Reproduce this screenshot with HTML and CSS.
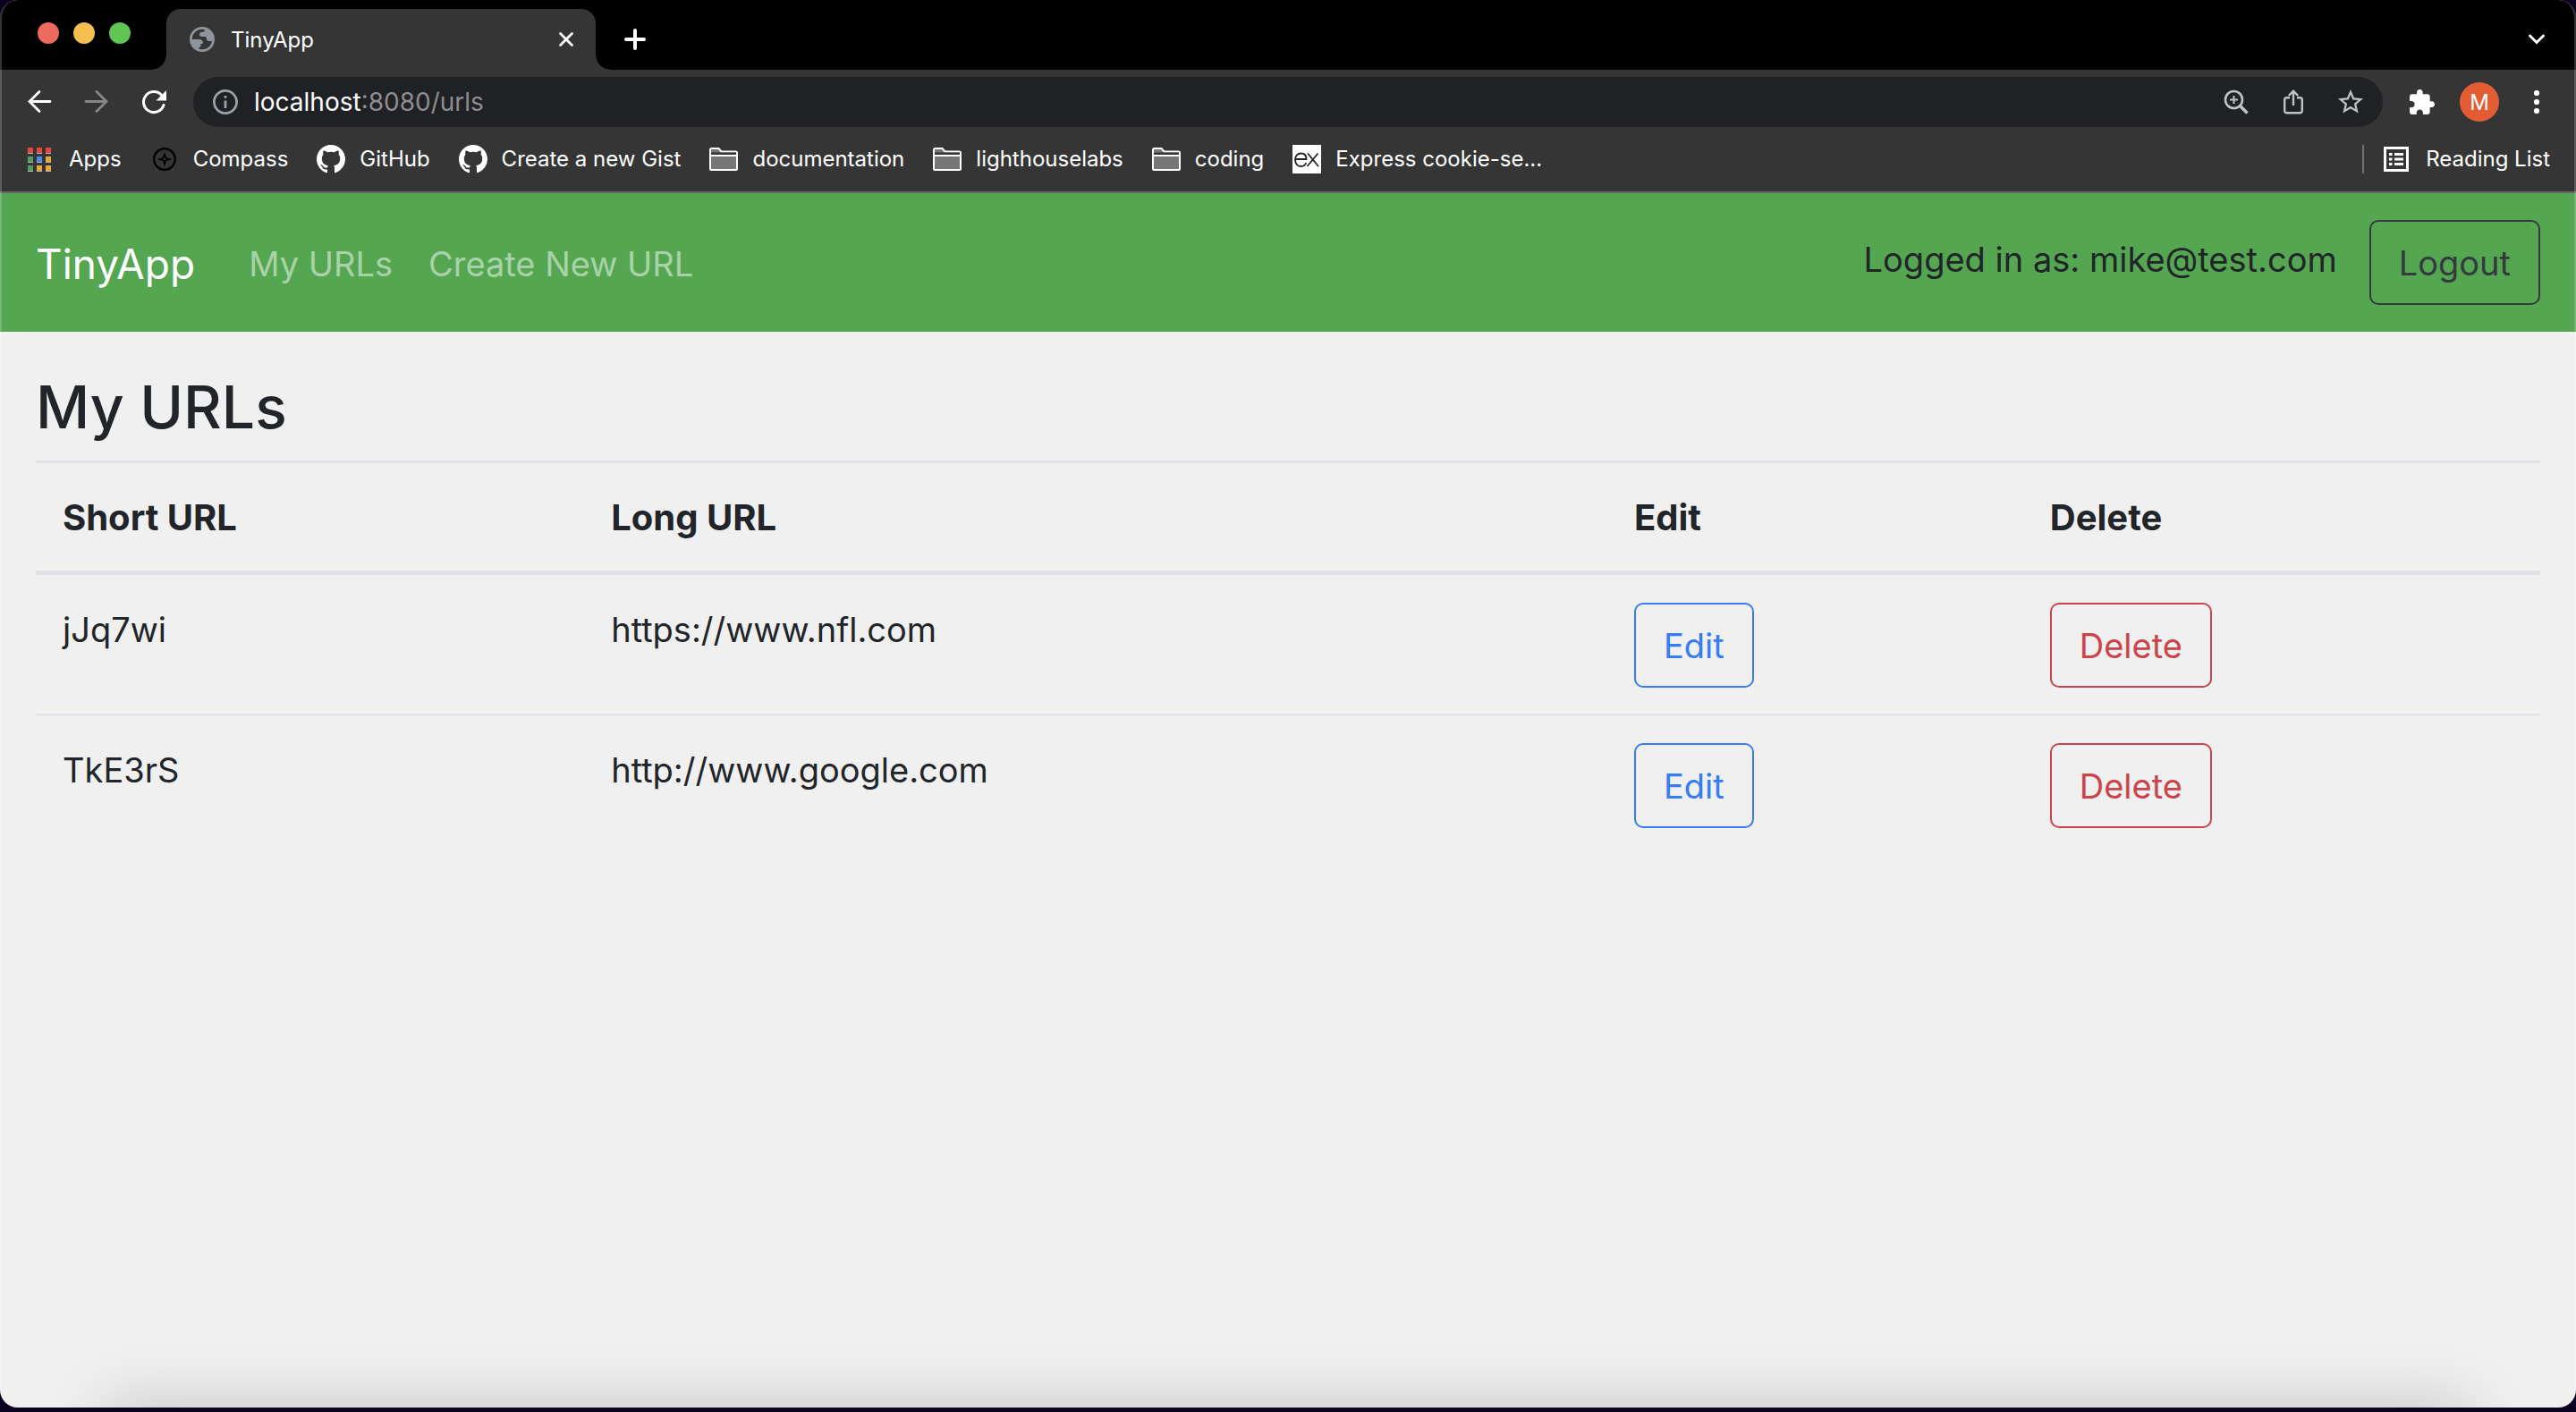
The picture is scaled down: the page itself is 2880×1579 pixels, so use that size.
FILE: index.html
```html
<!DOCTYPE html>
<html lang="en">
<head>
<meta charset="utf-8">
<title>TinyApp</title>
<link rel="stylesheet" href="styles.css">
</head>
<body>
<div class="window">
  <header class="chrome">
    <div class="tabstrip">
      <div class="lights">
        <button class="light red" aria-label="Close window"></button>
        <button class="light yellow" aria-label="Minimize window"></button>
        <button class="light green" aria-label="Zoom window"></button>
      </div>
      <div class="tab">
        <svg class="i28" viewBox="0 0 28 28"><circle cx="14" cy="14" r="12.600" fill="none" stroke="#8d949b" stroke-width="2.800"/><path fill="#8d949b" d="M1.500 14h9.500c2 0 4 1.500 4 3.500 0 1-1 1.500-2.500 1.500v2.500l-2 2v3A13 13 0 0 1 1.500 14zM17 2c0 3-1 3.800-3 3.800s-3 1-3 2.700 1 2.500 2.500 2.500h3.500c1.500 0 2 1 2 2.500s1 2.500 2.500 2.500h5A13 13 0 0 0 17 2z"/></svg>
        <span class="tab-title">TinyApp</span>
        <button class="tab-close" aria-label="Close tab"><svg class="i18" viewBox="0 0 18 18"><path d="M2.500 2.500l13 13M15.500 2.500l-13 13" stroke="#fff" stroke-width="2.800" stroke-linecap="round"/></svg></button>
      </div>
      <button class="new-tab" aria-label="New tab"><svg class="i24" viewBox="0 0 24 24"><path d="M12 2v20M2 12h20" stroke="#fff" stroke-width="4" stroke-linecap="round"/></svg></button>
      <button class="tab-search" aria-label="Search tabs"><svg class="i20" viewBox="0 0 20 20"><path d="M2.500 6l7.500 7.500L17.500 6" fill="none" stroke="#fff" stroke-width="3" stroke-linecap="round"/></svg></button>
    </div>
    <div class="toolbar">
      <div class="nav-buttons">
        <button aria-label="Back"><svg class="i28" viewBox="0 0 28 28"><path d="M26 13.500H3M14 2.500l-11 11 11 11" fill="none" stroke="#fff" stroke-width="2.800" stroke-linecap="round"/></svg></button>
        <button aria-label="Forward"><svg class="i28" viewBox="0 0 28 28"><path d="M2 13.500h23M14 2.500l11 11-11 11" fill="none" stroke="#868686" stroke-width="2.800" stroke-linecap="round"/></svg></button>
        <button aria-label="Reload"><svg class="i28" viewBox="0 0 28 28"><path d="M25 17.500A11.500 11.500 0 1 1 22.500 6.300" fill="none" stroke="#fff" stroke-width="3" stroke-linecap="round"/><path d="M28 1v11.500H16.500z" fill="#fff"/></svg></button>
      </div>
      <div class="omnibox">
        <svg class="i28" viewBox="2 2 20 20"><path fill="#9aa0a6" d="M11 7h2v2h-2zm0 4h2v6h-2zm1-9C6.480 2 2 6.480 2 12s4.480 10 10 10 10-4.480 10-10S17.520 2 12 2zm0 18c-4.410 0-8-3.590-8-8s3.590-8 8-8 8 3.590 8 8-3.590 8-8 8z"/></svg>
        <div class="address"><label for="address">localhost</label><input id="address" type="text" value=":8080/urls"></div>
        <div class="omni-actions">
          <button aria-label="Page zoom"><svg class="i28" viewBox="0 0 28 28"><g fill="none" stroke="#c0c1c3"><circle cx="11.500" cy="11.500" r="9.500" stroke-width="2.600"/><path d="M18 18l8.500 8.500" stroke-width="3.600"/><path d="M11.500 7v9M7 11.500h9" stroke-width="2"/></g></svg></button>
          <button aria-label="Share"><svg class="i28" viewBox="0 0 28 28"><g fill="none" stroke="#c0c1c3" stroke-width="2.400"><path d="M10 9.200H6.500a2.300 2.300 0 0 0-2.300 2.300V24a2.300 2.300 0 0 0 2.300 2.300h15a2.300 2.300 0 0 0 2.300-2.300V11.500a2.300 2.300 0 0 0-2.300-2.300H18M14 18V2.500M8.800 7L14 1.800 19.200 7"/></g></svg></button>
          <button aria-label="Bookmark this page"><svg class="i28" viewBox="2 2 20 20"><path fill="#c0c1c3" d="M22 9.240l-7.190-.62L12 2 9.190 8.630 2 9.240l5.460 4.730L5.820 21 12 17.270 18.180 21l-1.630-7.030L22 9.240zM12 15.400l-3.760 2.270 1-4.280-3.320-2.880 4.380-.38L12 6.100l1.710 4.040 4.380.38-3.320 2.880 1 4.280L12 15.400z"/></svg></button>
        </div>
      </div>
      <button aria-label="Extensions"><svg class="i28" viewBox="2 1 21 21"><path fill="#fff" d="M20.500 11H19V7c0-1.100-.9-2-2-2h-4V3.500C13 2.120 11.880 1 10.500 1S8 2.120 8 3.500V5H4c-1.100 0-1.990.9-1.990 2v3.800H3.500c1.490 0 2.700 1.210 2.700 2.700s-1.210 2.700-2.700 2.700H2V20c0 1.100.9 2 2 2h3.800v-1.500c0-1.490 1.210-2.700 2.700-2.700 1.490 0 2.700 1.210 2.700 2.700V22H17c1.100 0 2-.9 2-2v-4h1.500c1.380 0 2.500-1.120 2.500-2.500S21.880 11 20.500 11z"/></svg></button>
      <button class="avatar">M</button>
      <button class="menu" aria-label="Menu"><svg class="i28" viewBox="0 0 28 28"><g fill="#fff"><circle cx="14" cy="4" r="3.100"/><circle cx="14" cy="14" r="3.100"/><circle cx="14" cy="24" r="3.100"/></g></svg></button>
    </div>
    <nav class="bookmarks" aria-label="Bookmarks">
      <a class="apps" href="#"><svg class="i28" viewBox="0 0 28 28"><path fill="#b5b5b5" d="M1 2h6v6H1zM11 2h6v6h-6zM21 2h6v6h-6zM1 12h6v6H1zM11 12h6v6h-6zM21 12h6v6h-6zM1 22h6v6H1zM11 22h6v6h-6zM21 22h6v6h-6z"/><path fill="#e8453c" d="M1 1h6v6H1zM11 1h6v6h-6zM21 1h6v6h-6z"/><path fill="#529d5e" d="M1 11h6v6H1zM1 21h6v6H1z"/><path fill="#4c8bf5" d="M11 11h6v6h-6z"/><path fill="#e9a83a" d="M21 11h6v6h-6zM11 21h6v6h-6zM21 21h6v6h-6z"/></svg>Apps</a>
      <a href="#"><svg class="i32" viewBox="0 0 32 32"><circle cx="16" cy="16" r="11.800" fill="none" stroke="#000" stroke-width="2.400"/><path d="M16 7.500l2 6.500 6.500 2-6.500 2-2 6.500-2-6.500L7.500 16l6.500-2z"/><circle cx="16" cy="16" r="1.500" fill="#353535"/></svg>Compass</a>
      <a href="#"><svg class="i32" viewBox="0 0 16 16"><path fill="#fff" d="M8 0C3.580 0 0 3.580 0 8c0 3.540 2.290 6.530 5.470 7.590.4.070.55-.17.55-.38 0-.19-.01-.82-.01-1.490-2.010.37-2.530-.49-2.690-.94-.09-.23-.48-.94-.82-1.130-.28-.15-.68-.52-.01-.53.63-.01 1.080.58 1.230.82.720 1.210 1.870.87 2.330.66.070-.52.280-.87.510-1.070-1.780-.2-3.640-.89-3.640-3.950 0-.87.310-1.590.82-2.150-.08-.2-.36-1.020.08-2.120 0 0 .67-.21 2.200.82.640-.18 1.320-.27 2-.27s1.360.09 2 .27c1.530-1.040 2.200-.82 2.200-.82.440 1.100.160 1.920.080 2.120.510.560.820 1.270.820 2.150 0 3.070-1.870 3.750-3.650 3.950.290.250.540.730.540 1.480 0 1.070-.01 1.930-.01 2.200 0 .210.150.460.550.380A8.010 8.010 0 0 0 16 8c0-4.420-3.580-8-8-8z"/></svg>GitHub</a>
      <a href="#"><svg class="i32" viewBox="0 0 16 16"><path fill="#fff" d="M8 0C3.580 0 0 3.580 0 8c0 3.540 2.290 6.530 5.470 7.590.4.070.55-.17.55-.38 0-.19-.01-.82-.01-1.490-2.010.37-2.530-.49-2.690-.94-.09-.23-.48-.94-.82-1.130-.28-.15-.68-.52-.01-.53.63-.01 1.080.58 1.230.82.720 1.210 1.870.87 2.330.66.070-.52.280-.87.510-1.070-1.780-.2-3.640-.89-3.640-3.950 0-.87.310-1.590.82-2.150-.08-.2-.36-1.020.08-2.120 0 0 .67-.21 2.200.82.640-.18 1.320-.27 2-.27s1.360.09 2 .27c1.530-1.040 2.200-.82 2.200-.82.440 1.100.160 1.920.080 2.120.510.560.820 1.270.820 2.150 0 3.070-1.870 3.750-3.650 3.950.290.250.540.730.540 1.480 0 1.070-.01 1.930-.01 2.200 0 .210.150.460.550.380A8.010 8.010 0 0 0 16 8c0-4.420-3.580-8-8-8z"/></svg>Create a new Gist</a>
      <a href="#"><svg class="i32" viewBox="0 0 32 32"><path d="M1 27V5.500Q1 4 2.500 4h8l3 3.500H29.500Q31 7.500 31 9v18q0 1-1 1H2q-1 0-1-1z" fill="#777" stroke="#fff" stroke-width="2"/><path d="M2 8.500h28V11H2z" fill="#353535"/><path d="M1 12h30" stroke="#fff" stroke-width="2"/></svg>documentation</a>
      <a href="#"><svg class="i32" viewBox="0 0 32 32"><path d="M1 27V5.500Q1 4 2.500 4h8l3 3.500H29.500Q31 7.500 31 9v18q0 1-1 1H2q-1 0-1-1z" fill="#777" stroke="#fff" stroke-width="2"/><path d="M2 8.500h28V11H2z" fill="#353535"/><path d="M1 12h30" stroke="#fff" stroke-width="2"/></svg>lighthouselabs</a>
      <a href="#"><svg class="i32" viewBox="0 0 32 32"><path d="M1 27V5.500Q1 4 2.500 4h8l3 3.500H29.500Q31 7.500 31 9v18q0 1-1 1H2q-1 0-1-1z" fill="#777" stroke="#fff" stroke-width="2"/><path d="M2 8.500h28V11H2z" fill="#353535"/><path d="M1 12h30" stroke="#fff" stroke-width="2"/></svg>coding</a>
      <a href="#"><svg class="i32" viewBox="0 0 32 32"><path fill="#fff" d="M0 0h32v32H0z"/><path d="M3 16h12.500c0-4-2.300-6.500-6-6.500S3 12 3 16.500s2.500 7.500 6.500 7.500c3 0 5-1.500 5.800-4M17 9.500L29 24M28.500 9.500L16.500 24" fill="none" stroke="#222" stroke-width="1.800"/></svg>Express cookie-se...</a>
      <a class="reading" href="#"><svg class="i28" viewBox="0 0 28 28"><path d="M1.500 1.500h25v25h-25z" fill="none" stroke="#fff" stroke-width="3"/><path d="M6 8.500h3.500M12 8.500h10M6 14h3.500M12 14h10M6 19.500h3.500M12 19.500h10" stroke="#fff" stroke-width="2.800"/></svg>Reading List</a>
    </nav>
  </header>
  <div class="page">
    <nav class="navbar">
      <a class="brand" href="#">TinyApp</a>
      <a class="nav-link" href="#">My URLs</a>
      <a class="nav-link" href="#">Create New URL</a>
      <form class="session">
        <span class="user">Logged in as: mike@test.com</span>
        <button class="btn dark" type="button">Logout</button>
      </form>
    </nav>
    <main>
      <h3>My URLs</h3>
      <table>
        <colgroup><col class="c-short"><col class="c-long"><col class="c-edit"><col class="c-delete"></colgroup>
        <thead><tr><th scope="col">Short URL</th><th scope="col">Long URL</th><th scope="col">Edit</th><th scope="col">Delete</th></tr></thead>
        <tbody>
          <tr><td>jJq7wi</td><td>https://www.nfl.com</td><td><button class="btn primary">Edit</button></td><td><button class="btn danger">Delete</button></td></tr>
          <tr><td>TkE3rS</td><td>http://www.google.com</td><td><button class="btn primary">Edit</button></td><td><button class="btn danger">Delete</button></td></tr>
        </tbody>
      </table>
    </main>
  </div>
</div>
</body>
</html>
```
FILE: styles.css
```css
* { box-sizing: border-box; }
body {
  margin: 0;
  min-height: 100vh;
  display: flex;
  flex-direction: column;
  padding-bottom: 5px;
  background: #0a001f;
  font-family: Inter, "Liberation Sans", sans-serif;
}
button { border: 0; padding: 0; margin: 0; background: none; color: inherit; font: inherit; }
a { color: inherit; text-decoration: none; }
svg { display: block; flex: none; }
.i18 { width: 18px; height: 18px; }
.i20 { width: 20px; height: 20px; }
.i24 { width: 24px; height: 24px; }
.i28 { width: 28px; height: 28px; }
.i32 { width: 32px; height: 32px; }

.window {
  flex: 1;
  display: flex;
  flex-direction: column;
  position: relative;
  overflow: hidden;
  border-radius: 20px;
  background: #f0f0f0;
}
/* light rim round the window */
.window::after {
  content: "";
  position: absolute;
  inset: 0;
  border: 2px solid rgba(255, 255, 255, .2);
  border-width: 0 2px;
  border-radius: 20px;
  pointer-events: none;
}

.chrome { background: #353535; color: #fff; font-size: 24px; border-bottom: 2px solid #666; }
.tabstrip { height: 78px; display: flex; align-items: center; background: #000; padding-right: 34px; }
.lights { display: flex; gap: 16px; padding: 0 40px 4px 42px; }
.light { width: 24px; height: 24px; border-radius: 50%; }
.red { background: #ed6a5e; }
.yellow { background: #f5bf4f; }
.green { background: #61c554; }
.tab {
  position: relative;
  align-self: flex-end;
  display: flex;
  align-items: center;
  width: 480px;
  height: 68px;
  padding: 0 24px 0 26px;
  border-radius: 16px 16px 0 0;
  background: #353535;
}
/* flared feet of the active tab */
.tab::before, .tab::after { content: ""; position: absolute; bottom: 0; width: 16px; height: 16px; }
.tab::before { left: -16px; background: radial-gradient(circle at 0 0, #000 15px, #353535 16px); }
.tab::after { right: -16px; background: radial-gradient(circle at 100% 0, #000 15px, #353535 16px); }
.tab-title { flex: 1; padding-left: 18px; }
.new-tab { margin-left: 32px; padding-top: 10px; }
.tab-search { margin-left: auto; padding-top: 10px; }

.toolbar { display: flex; align-items: center; padding: 8px 30px; }
.nav-buttons { display: flex; gap: 36px; width: 186px; }
.omnibox {
  flex: 1;
  display: flex;
  align-items: center;
  height: 56px;
  padding: 0 22px;
  margin-right: 30px;
  border-radius: 28px;
  background: #202124;
}
.address { flex: 1; display: flex; align-items: center; padding-left: 18px; font-size: 28px; line-height: 40px; }
.address input { flex: 1; border: 0; padding: 0; background: none; color: #8d8d8f; font: inherit; outline: 0; }
.omni-actions { display: flex; gap: 36px; }
.avatar { width: 44px; height: 44px; margin: 0 28px; border-radius: 50%; background: #e25d33; font-size: 24px; }

.bookmarks { display: flex; align-items: center; gap: 32px; height: 64px; padding: 0 29px 8px 30px; }
.bookmarks a { display: flex; align-items: center; gap: 16px; line-height: 32px; white-space: nowrap; }
.bookmarks .reading { margin-left: auto; gap: 19px; padding-left: 22px; border-left: 2px solid #707070; }
.bookmarks .apps { gap: 19px; }

.page { flex: 1; position: relative; overflow: hidden; color: #212529; font-size: 38px; line-height: 60px; }
/* soft shade along the bottom edge */
.page::after {
  content: "";
  position: absolute;
  left: 120px;
  right: 120px;
  top: 100%;
  height: 100px;
  box-shadow: 0 0 75px rgba(0, 0, 0, .2);
}
.navbar { display: flex; align-items: center; gap: 40px; padding: 30px 40px; background: #54a651; }
.brand { font-size: 46px; color: #fff; margin-right: 20px; padding-top: 2px; }
.nav-link { color: rgba(255, 255, 255, .5); padding-top: 2px; }
.session { display: flex; gap: 36px; margin-left: auto; }
.user { padding-top: 14px; }
.btn { padding: 16px 31px 15px; border: 2px solid; border-radius: 10px; line-height: 60px; }
.dark { color: #343a40; }
.primary { color: #357cf6; }
.danger { color: #cb444a; }
main { padding: 40px; }
h3 { margin: 0; padding: 2px 0 18px; font-size: 66px; font-weight: 500; line-height: 84px; }
table { width: 100%; table-layout: fixed; border-spacing: 0; }
.c-short { width: 21.900%; }
.c-long { width: 40.850%; }
.c-edit { width: 16.600%; }
th, td { padding: 31px 30px 29px; text-align: left; vertical-align: top; border-top: 2px solid #dee2e6; }
th { font-size: 40px; font-weight: 700; border-top-width: 3px; border-bottom: 5px solid #dee2e6; }
tbody tr:first-child td { border-top: 0; }
td .btn { display: block; }
```
